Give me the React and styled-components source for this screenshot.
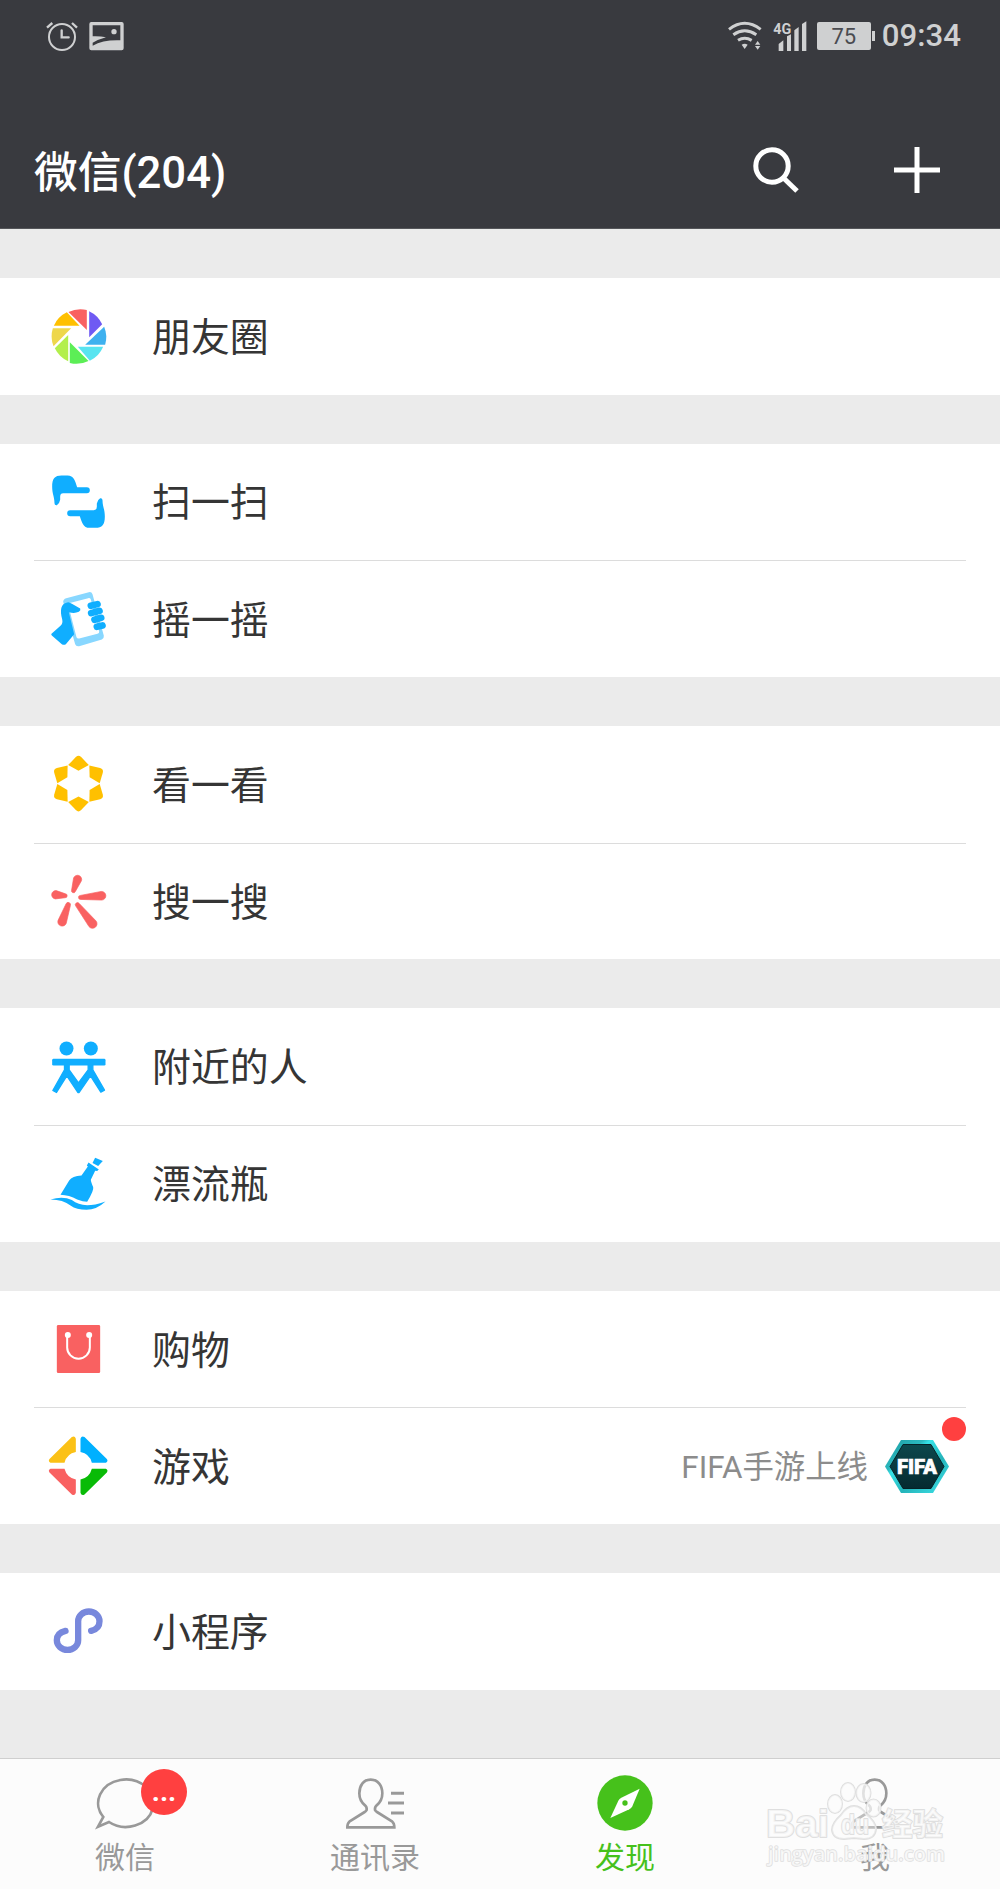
import styled, { createGlobalStyle } from 'styled-components';

const GlobalStyle = createGlobalStyle`
    * {
        box-sizing: border-box;
    }
    body {
        margin: 0;
        background: #ebebeb;
        font-family: Roboto, 'Noto Sans CJK SC', sans-serif;
    }
    svg {
        display: block;
        flex: none;
        overflow: visible;
    }
`;

const Screen = styled.div`
    width: 1000px;
    height: 1889px;
    display: flex;
    flex-direction: column;
    background: #ebebeb;
`;
const Header = styled.header`
    height: 228.6px;
    background: #393a3f;
    border-bottom: 1px solid #55565a;
`;
const StatusBar = styled.div`
    height: 72px;
    padding: 0 39px 0 46px;
    display: flex;
    align-items: center;
    justify-content: space-between;
    color: #cfd0d1;
`;
const StatusGroup = styled.div`
    display: flex;
    align-items: center;
    gap: ${(props) => props.$gap};
`;
const Battery = styled.div`
    position: relative;
    width: 54px;
    height: 28px;
    margin: 0 11px 0 10px;
    border-radius: 2px;
    background: #cfd0d1;
    color: #4a4b50;
    font-size: 22px;
    line-height: 30px;
    text-align: center;

    &::after {
        content: '';
        position: absolute;
        top: 9px;
        right: -4px;
        width: 3px;
        height: 10px;
        background: #cfd0d1;
    }
`;
const Clock = styled.span`
    font-size: 31.2px;
    font-weight: 500;
    line-height: 36px;
`;
const NavBar = styled.div`
    height: 113px;
    margin-top: 43px;
    padding: 0 60px 0 34px;
    display: flex;
    align-items: center;
    color: #fff;
`;
const Title = styled.h1`
    flex: 1;
    margin: 0;
    padding-top: 2px;
    font-size: 43.7px;
    font-weight: 500;
    line-height: 60px;
`;
const NavActions = styled.div`
    display: flex;
    gap: 95px;
    margin-top: -3px;
`;

const List = styled.main`
    flex: 1;
    padding-top: 49.3px;
    display: flex;
    flex-direction: column;
    gap: 49.05px;
`;
const Group = styled.section`
    background: #fff;
`;
const Row = styled.div`
    height: 116.66px;
    margin: 0 34px;
    padding-left: 14px;
    display: flex;
    align-items: center;
    gap: 44px;

    & + & {
        border-top: 1px solid #dcdcdc;
    }
`;
const RowLabel = styled.span`
    flex: 1;
    padding-top: 3px;
    color: #353535;
    font-size: 38.9px;
    line-height: 56px;
`;
const Notice = styled.div`
    position: relative;
    padding-right: 17px;
    display: flex;
    align-items: center;
    gap: 17px;
    color: #8c8c8c;
    font-size: 31.4px;
    line-height: 46px;
`;
const NoticeText = styled.span`
    padding-top: 4px;
`;
const RedDot = styled.i`
    position: absolute;
    top: -23px;
    right: 0;
    width: 24px;
    height: 24px;
    border-radius: 50%;
    background: #ff4040;
`;

const TabBar = styled.nav`
    position: relative;
    height: 131px;
    display: flex;
    background: #fcfcfc;
    border-top: 1px solid #cfcfcf;
`;
const Tab = styled.div`
    flex: 1;
    padding-top: 14px;
    display: flex;
    flex-direction: column;
    align-items: center;
    gap: 7px;
    color: ${(props) => (props.$active ? '#46c11b' : '#999')};
    font-size: 30px;
    line-height: 36px;
`;
const TabIcon = styled.div`
    position: relative;
`;
const Badge = styled.span`
    position: absolute;
    top: -4px;
    left: 46px;
    width: 46px;
    height: 46px;
    border-radius: 50%;
    background: #ff4040;
    color: #fff;
    font-size: 28px;
    font-weight: 700;
    line-height: 45px;
    text-align: center;
`;
const Watermark = styled.svg`
    position: absolute;
    top: 18px;
    left: 760px;
    font-weight: 700;
    fill: rgba(252, 252, 252, 0.72);
    stroke: #dfdfdf;
    stroke-width: 2px;
    stroke-linejoin: round;
    paint-order: stroke;
`;

function ListIcon({ top, children }) {
    return (
        <svg width="60" height="60" viewBox={`144.5 ${top} 180 180`}>
            {children}
        </svg>
    );
}

const MomentsIcon = () => (
    <ListIcon top={109}>
        <path fill="#f96161" d="M206 127A82 82 0 0 1 261 121V181Z" />
        <path fill="#6f5af3" d="M268 125A82 82 0 0 1 307 164L268 203Z" />
        <path fill="#3eb1ef" d="M313 171A82 82 0 0 1 316 225H256Z" />
        <path fill="#58e4f0" d="M234 231H310A82 82 0 0 1 270 273Z" />
        <path fill="#5cee56" d="M210 218L266 274A82 82 0 0 1 210 280Z" />
        <path fill="#b3ef4c" d="M205 196V275A82 82 0 0 1 165 236Z" />
        <path fill="#eed74c" d="M214 176L161 230A82 82 0 0 1 159 176Z" />
        <path fill="#ffc000" d="M162 168A82 82 0 0 1 201 128L239 168Z" />
    </ListIcon>
);

const scanHand =
    'M157 650C157 625 165 616 185 616H203C222 616 226 633 232 651H261A9 9 0 0 1 261 669H190Q181 669 181 679V689Q179 701 171 705Q164 706 164 699C164 680 157 672 157 650Z';
const ScanIcon = () => (
    <ListIcon top={605.5}>
        <g fill="#10aeff">
            <path d={scanHand} />
            <path d={scanHand} transform="rotate(180 236 694.5)" />
        </g>
    </ListIcon>
);

const ShakeIcon = () => (
    <ListIcon top={115.6}>
        <path
            fill="#88d7ff"
            fillRule="evenodd"
            d="M199 143L267 125Q275 123 278 131L312 256Q313 264 306 267L238 287Q229 289 226 281L190 154Q190 146 199 143ZM204 159L230 260Q232 265 238 264L293 250Q299 248 298 243L273 147Q271 142 265 143Z"
        />
        <path
            fill="#10aeff"
            d="M155 250L182 226Q190 218 187 206C180 180 182 158 205 155Q212 156 241 174Q244 179 237 184Q224 190 207 185L223 251L198 281Q192 285 186 281L156 255Q153 252 155 250Z"
        />
        <path
            stroke="#10aeff"
            strokeWidth="20"
            strokeLinecap="round"
            d="M273 166L293 161M274 188L299 181M284 208L304 202M291 229L308 225"
        />
    </ListIcon>
);

const LookIcon = () => (
    <ListIcon top={612.7}>
        {[0, 60, 120, 180, 240, 300].map((angle) => (
            <path
                key={angle}
                fill="#ffc000"
                transform={`rotate(${angle} 236 701.5)`}
                d="M205 646L228 622Q236 614 244 622L267 646L236 663Z"
            />
        ))}
    </ListIcon>
);

// [x, y, r] of the wide end, then of the narrow end
const petals = [
    [233, 148, 12.5, 221, 182, 6],
    [168, 194, 12.5, 196, 197, 6],
    [305, 197, 13, 242, 202, 6],
    [187, 275, 13, 205, 224, 7],
    [278, 281, 13.5, 233, 224, 6.5],
];
function petalPath([x1, y1, r1, x2, y2, r2]) {
    const length = Math.hypot(x2 - x1, y2 - y1);
    const nx = (y1 - y2) / length;
    const ny = (x2 - x1) / length;
    return `M${x1 + nx * r1} ${y1 + ny * r1}L${x2 + nx * r2} ${y2 + ny * r2}A${r2} ${r2} 0 0 0 ${x2 - nx * r2} ${y2 - ny * r2}L${x1 - nx * r1} ${y1 - ny * r1}A${r1} ${r1} 0 0 0 ${x1 + nx * r1} ${y1 + ny * r1}Z`;
}
const SearchOneIcon = () => (
    <ListIcon top={122.7}>
        {petals.map((petal) => (
            <path
                key={petal[0]}
                fill="#f96161"
                stroke="#f96161"
                strokeWidth="2"
                d={petalPath(petal)}
            />
        ))}
    </ListIcon>
);

const NearbyIcon = () => (
    <ListIcon top={619.6}>
        <g fill="#10aeff">
            <circle cx="200" cy="654" r="21" />
            <circle cx="273" cy="654" r="21" />
            <rect x="157" y="685" width="160" height="20" rx="4" />
            <path
                stroke="#10aeff"
                strokeWidth="4"
                strokeLinejoin="round"
                d="M194 703H208V718L236 757L265 718V703H279V718L314 779L303 785L272 736L238 786H234L201 736L170 786L159 780L194 718Z"
            />
        </g>
    </ListIcon>
);

const BottleIcon = () => (
    <ListIcon top={129.7}>
        <g fill="#10aeff">
            <path d="M286 141L309 151L295 166L278 157Z" />
            <path d="M182 252L208 209Q217 196 245 194L264 167L261 164L266 155L297 176L292 181L286 180L273 207Q273 213 280 229Q283 239 262 273Q250 273 232 266Q208 253 182 252Z" />
            <path d="M152 266Q190 255 216 268C240 285 265 290 317 272Q290 297 260 297Q230 297 212 284Q190 266 152 266Z" />
        </g>
    </ListIcon>
);

const ShoppingIcon = () => (
    <ListIcon top={626.8}>
        <rect x="171" y="645" width="130" height="144" rx="4" fill="#f96161" />
        <circle cx="204" cy="675" r="9" fill="#fff" />
        <circle cx="268" cy="675" r="9" fill="#fff" />
        <path
            fill="none"
            stroke="#fff"
            strokeWidth="6"
            d="M202 675V712A34 34 0 0 0 270 712V675"
        />
    </ListIcon>
);

const gameQuarter =
    'M228 145V185Q201 190 194 217H152Q144 213 149 206L216 140Q225 135 228 145Z';
const GameIcon = () => (
    <ListIcon top={136.8}>
        <path fill="#fbc116" d={gameQuarter} />
        <path
            fill="#00b0ff"
            d={gameQuarter}
            transform="translate(470 0) scale(-1 1)"
        />
        <path
            fill="#f96161"
            d={gameQuarter}
            transform="translate(0 452) scale(1 -1)"
        />
        <path
            fill="#09bb07"
            d={gameQuarter}
            transform="translate(470 452) scale(-1 -1)"
        />
    </ListIcon>
);

const MiniProgramIcon = () => (
    <ListIcon top={633.4}>
        <path
            fill="none"
            stroke="#7888dc"
            strokeWidth="19"
            strokeLinecap="round"
            d="M197 723C180 727 171 738 171 751A32 29 0 0 0 235 751V694A32 29 0 0 1 299 694C299 708 290 719 274 723"
        />
    </ListIcon>
);

const FifaIcon = () => (
    <svg width="64" height="53" viewBox="0 0 64 53">
        <defs>
            <linearGradient id="fifaEdge" x1="0" y1="0" x2="1" y2="1">
                <stop offset="0" stopColor="#1c9aa0" />
                <stop offset="0.3" stopColor="#2bb8be" />
                <stop offset="0.36" stopColor="#35e2e8" />
                <stop offset="0.62" stopColor="#25b4ba" />
                <stop offset="1" stopColor="#3fe6ec" />
            </linearGradient>
            <linearGradient id="fifaFace" x1="0" y1="0" x2="0" y2="1">
                <stop offset="0" stopColor="#0c474c" />
                <stop offset="1" stopColor="#052a30" />
            </linearGradient>
        </defs>
        <path fill="url(#fifaEdge)" d="M16 0H48L64 26.5L48 53H16L0 26.5Z" />
        <path
            fill="url(#fifaFace)"
            stroke="#052226"
            d="M18 4.5H46L59 26.5L46 48.5H18L5 26.5Z"
        />
        <text
            x="12"
            y="33.5"
            fill="#fff"
            stroke="#fff"
            strokeWidth="0.6"
            fontSize="19.5"
            fontWeight="900"
            textLength="40"
            lengthAdjust="spacingAndGlyphs"
        >
            FIFA
        </text>
    </svg>
);

const AlarmIcon = () => (
    <svg width="32" height="30" viewBox="138 63 96 90">
        <g fill="none" stroke="#cfd0d1" strokeWidth="6">
            <circle cx="186" cy="111" r="39" />
            <path d="M185 91V112H206" strokeLinecap="round" strokeWidth="7" />
            <path d="M141 83L157 69M216 69L231 83" strokeWidth="7" />
        </g>
    </svg>
);

const PictureIcon = () => (
    <svg width="35" height="30" viewBox="267 63 105 90">
        <path
            fill="#cfd0d1"
            fillRule="evenodd"
            d="M274 66H365Q371 66 371 72V145Q371 151 365 151H274Q268 151 268 145V72Q268 66 274 66ZM278 76V109Q300 108 318 112Q296 118 278 128V137Q310 119 361 121V76Z"
        />
        <circle cx="342" cy="95" r="8" fill="#cfd0d1" />
    </svg>
);

const WifiIcon = () => (
    <svg width="34" height="30" viewBox="83 63 102 90">
        <g fill="none" stroke="#cfd0d1" strokeWidth="9">
            <path d="M86 88Q133 52 181 88M99 104Q133 81 168 104M113 121Q133 109 154 121" />
        </g>
        <path
            fill="#cfd0d1"
            d="M124 134Q133 129 142 134L133 147ZM164 134L172 123L180 134ZM164 138H180L172 149Z"
        />
    </svg>
);

const SignalIcon = () => (
    <svg width="34" height="30" viewBox="218 63 102 90">
        <path
            fill="#cfd0d1"
            d="M235 132L249 121V153H235ZM260 109L272 103V153H260ZM282 91L295 81V153H282ZM305 72L318 64V153H305Z"
        />
        <text
            x="219"
            y="101"
            fill="#cfd0d1"
            fontSize="42"
            fontWeight="700"
            textLength="54"
            lengthAdjust="spacingAndGlyphs"
        >
            4G
        </text>
    </svg>
);

const SearchIcon = () => (
    <svg width="46" height="46" viewBox="0 0 46 46">
        <g fill="none" stroke="#fff" strokeWidth="5">
            <circle cx="19" cy="19" r="16.2" />
            <path d="M30.5 31L44 44" />
        </g>
    </svg>
);

const PlusIcon = () => (
    <svg width="46" height="46" viewBox="0 0 46 46">
        <path stroke="#fff" strokeWidth="5" d="M23 0V46M0 23H46" />
    </svg>
);

const ChatIcon = () => (
    <svg width="60" height="60" viewBox="105 97 180 180">
        <path
            fill="none"
            stroke="#999"
            strokeWidth="8"
            d="M147 244A83 71 0 1 0 130 229L114 258Z"
        />
    </svg>
);

const person =
    'M932 117C910 117 898 135 898 158C898 174 906 187 915 194Q921 199 920 208Q918 212 914 214L868 243Q862 248 862 260H1003Q1003 248 997 243L951 214Q947 212 945 208Q944 199 950 194C959 187 967 174 967 158C967 135 954 117 932 117Z';
const ContactsIcon = () => (
    <svg width="60" height="60" viewBox="855 97 180 180">
        <g fill="none" stroke="#999" strokeWidth="8">
            <path d={person} />
            <path d="M993 158H1032M984 187H1032M993 217H1032" strokeWidth="9" />
        </g>
    </svg>
);

const DiscoverIcon = () => (
    <svg width="60" height="60" viewBox="105 97 180 180">
        <circle cx="195" cy="187" r="83" fill="#46c11b" />
        <path
            fill="#fff"
            d="M239 144L217 197Q214 203 208 206L151 232L175 180Q178 174 184 171Z"
        />
        <circle cx="195" cy="187" r="8" fill="#46c11b" />
    </svg>
);

const MeIcon = () => (
    <svg width="60" height="60" viewBox="855 97 180 180">
        <path
            fill="none"
            stroke="#999"
            strokeWidth="8"
            transform="translate(12 0)"
            d={person}
        />
    </svg>
);

const groups = [
    [{ label: '朋友圈', Icon: MomentsIcon }],
    [
        { label: '扫一扫', Icon: ScanIcon },
        { label: '摇一摇', Icon: ShakeIcon },
    ],
    [
        { label: '看一看', Icon: LookIcon },
        { label: '搜一搜', Icon: SearchOneIcon },
    ],
    [
        { label: '附近的人', Icon: NearbyIcon },
        { label: '漂流瓶', Icon: BottleIcon },
    ],
    [
        { label: '购物', Icon: ShoppingIcon },
        { label: '游戏', Icon: GameIcon, notice: 'FIFA手游上线' },
    ],
    [{ label: '小程序', Icon: MiniProgramIcon }],
];

const tabs = [
    { label: '微信', Icon: ChatIcon, badge: '...' },
    { label: '通讯录', Icon: ContactsIcon },
    { label: '发现', Icon: DiscoverIcon, active: true },
    { label: '我', Icon: MeIcon },
];

function App() {
    return (
        <Screen lang="zh-CN">
            <GlobalStyle />
            <Header>
                <StatusBar>
                    <StatusGroup $gap="11px">
                        <AlarmIcon />
                        <PictureIcon />
                    </StatusGroup>
                    <StatusGroup>
                        <StatusGroup $gap="11px">
                            <WifiIcon />
                            <SignalIcon />
                        </StatusGroup>
                        <Battery>75</Battery>
                        <Clock>09:34</Clock>
                    </StatusGroup>
                </StatusBar>
                <NavBar>
                    <Title>微信(204)</Title>
                    <NavActions>
                        <SearchIcon />
                        <PlusIcon />
                    </NavActions>
                </NavBar>
            </Header>
            <List>
                {groups.map((rows) => (
                    <Group key={rows[0].label}>
                        {rows.map(({ label, Icon, notice }) => (
                            <Row key={label}>
                                <Icon />
                                <RowLabel>{label}</RowLabel>
                                {notice && (
                                    <Notice>
                                        <NoticeText>{notice}</NoticeText>
                                        <FifaIcon />
                                        <RedDot />
                                    </Notice>
                                )}
                            </Row>
                        ))}
                    </Group>
                ))}
            </List>
            <TabBar>
                {tabs.map(({ label, Icon, badge, active }) => (
                    <Tab key={label} $active={active}>
                        <TabIcon>
                            <Icon />
                            {badge && <Badge>{badge}</Badge>}
                        </TabIcon>
                        {label}
                    </Tab>
                ))}
                <Watermark width="190" height="100" viewBox="0 0 190 100">
                    <ellipse cx="75" cy="27" rx="7" ry="9" />
                    <ellipse cx="88" cy="15" rx="7" ry="9" />
                    <ellipse cx="103.5" cy="16" rx="7" ry="9" />
                    <ellipse cx="113.5" cy="31" rx="7" ry="8.5" />
                    <path
                        fillOpacity="0.5"
                        d="M94 29Q101 29 106 37Q116 45 116 52Q115 62 104 62L94 61L84 62Q73 62 72 53Q72 46 81 38Q87 29 94 29Z"
                    />
                    <text
                        x="6"
                        y="60"
                        fontFamily="Liberation Sans"
                        fontSize="39"
                        textLength="63"
                        lengthAdjust="spacingAndGlyphs"
                    >
                        Bai
                    </text>
                    <text
                        x="81"
                        y="57"
                        fontFamily="Liberation Sans"
                        fontSize="27"
                        textLength="28"
                        lengthAdjust="spacingAndGlyphs"
                    >
                        du
                    </text>
                    <text x="122" y="58" fontSize="30.5">
                        经验
                    </text>
                    <text
                        x="8"
                        y="84"
                        fontFamily="Open Sans"
                        fontSize="20.5"
                        fontWeight="600"
                        strokeWidth="1.5"
                        textLength="177"
                        lengthAdjust="spacingAndGlyphs"
                    >
                        jingyan.baidu.com
                    </text>
                </Watermark>
            </TabBar>
        </Screen>
    );
}

export default App;
